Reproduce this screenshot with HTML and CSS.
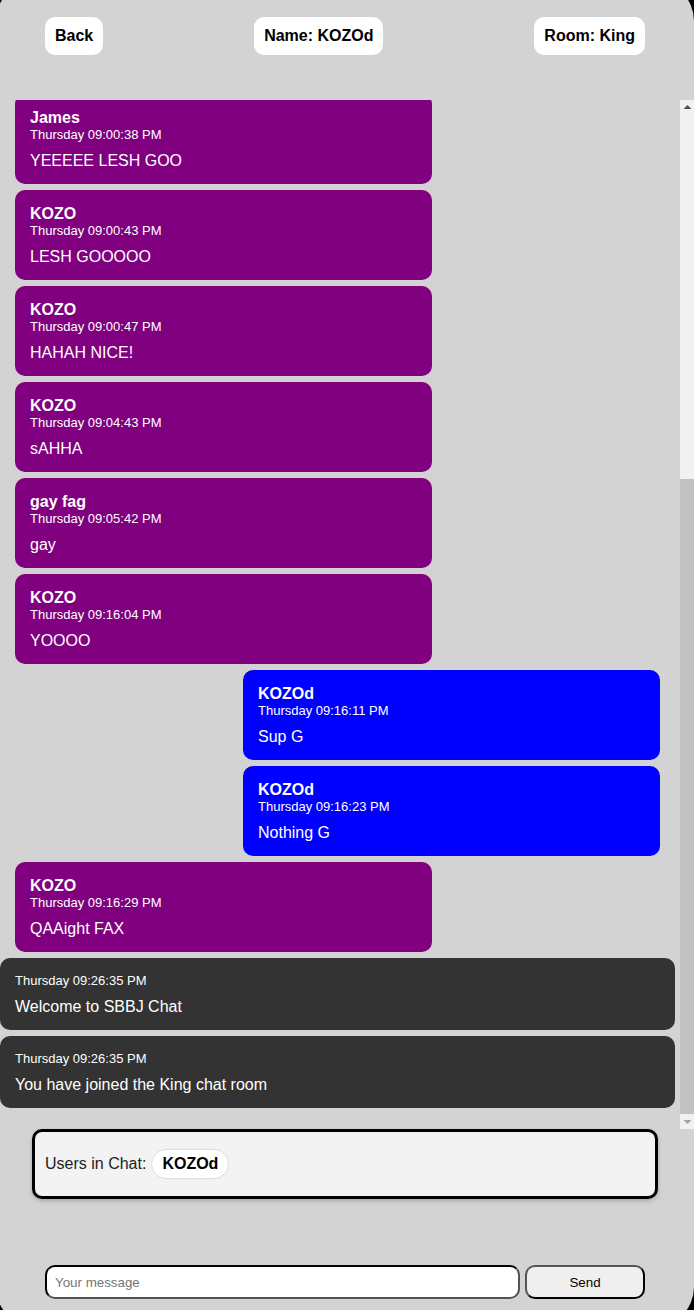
FILE: index.html
```html
<!DOCTYPE html>
<html lang="en">
<head>
<meta charset="utf-8">
<title>SBBJ Chat</title>
<link rel="stylesheet" href="styles.css">
</head>
<body>
<div class="app">
  <header class="topbar">
    <div class="top-btn">Back</div>
    <div class="top-btn">Name: KOZOd</div>
    <div class="top-btn">Room: King</div>
  </header>

  <div class="chat-row">
    <div class="chat">
      <div class="chat-inner">
        <div class="msg other"><div class="name">James</div><div class="time">Thursday 09:00:38 PM</div><div class="text">YEEEEE LESH GOO</div></div>
        <div class="msg other"><div class="name">KOZO</div><div class="time">Thursday 09:00:43 PM</div><div class="text">LESH GOOOOO</div></div>
        <div class="msg other"><div class="name">KOZO</div><div class="time">Thursday 09:00:47 PM</div><div class="text">HAHAH NICE!</div></div>
        <div class="msg other"><div class="name">KOZO</div><div class="time">Thursday 09:04:43 PM</div><div class="text">sAHHA</div></div>
        <div class="msg other"><div class="name">gay fag</div><div class="time">Thursday 09:05:42 PM</div><div class="text">gay</div></div>
        <div class="msg other"><div class="name">KOZO</div><div class="time">Thursday 09:16:04 PM</div><div class="text">YOOOO</div></div>
        <div class="msg mine"><div class="name">KOZOd</div><div class="time">Thursday 09:16:11 PM</div><div class="text">Sup G</div></div>
        <div class="msg mine"><div class="name">KOZOd</div><div class="time">Thursday 09:16:23 PM</div><div class="text">Nothing G</div></div>
        <div class="msg other"><div class="name">KOZO</div><div class="time">Thursday 09:16:29 PM</div><div class="text">QAAight FAX</div></div>
        <div class="msg system"><div class="time">Thursday 09:26:35 PM</div><div class="text">Welcome to SBBJ Chat</div></div>
        <div class="msg system"><div class="time">Thursday 09:26:35 PM</div><div class="text">You have joined the King chat room</div></div>
      </div>
    </div>
    <div class="scrollbar" aria-hidden="true">
      <div class="sb-btn">
        <svg width="15" height="15" viewBox="0 0 15 15"><path d="M3.5 9 L7.5 5 L11.5 9 Z" fill="#505050"/></svg>
      </div>
      <div class="sb-track"><div class="sb-thumb"></div></div>
      <div class="sb-btn">
        <svg width="15" height="15" viewBox="0 0 15 15"><path d="M3.5 6 L7.5 10 L11.5 6 Z" fill="#a3a3a3"/></svg>
      </div>
    </div>
  </div>

  <div class="users">
    <span class="users-label">Users in Chat:</span>
    <span class="user-pill">KOZOd</span>
  </div>

  <form class="composer">
    <input class="composer-input" type="text" placeholder="Your message">
    <button class="composer-send" type="button">Send</button>
  </form>
</div>
</body>
</html>
```

FILE: styles.css
```css
html, body {
  margin: 0;
  padding: 0;
  background: #000;
  overflow: hidden;
  height: 100%;
}

body {
  font-family: "Liberation Sans", Arial, sans-serif;
}

.app {
  width: 698px;
  height: 1346px;
  margin: -19px 0 0 -4px;
  background: #d3d3d3;
  border-radius: 40px;
  display: flex;
  flex-direction: column;
}

.topbar {
  display: flex;
  justify-content: space-between;
  padding: 36px 49px 0;
  margin-bottom: 45px;
}

.top-btn {
  background: #fff;
  color: #000;
  padding: 10px;
  border-radius: 10px;
  font-weight: bold;
  font-size: 16px;
  line-height: 18px;
}

.chat-row {
  margin-left: 4px;
  width: 695px;
  height: 1029px;
  flex: none;
  display: flex;
}

.chat {
  flex: 1;
  min-width: 0;
  overflow: hidden;
  display: flex;
  flex-direction: column-reverse;
}

.scrollbar {
  width: 15px;
  flex: none;
  display: flex;
  flex-direction: column;
  background: #f1f1f1;
}

.sb-btn {
  height: 15px;
  flex: none;
}

.sb-btn svg {
  display: block;
}

.sb-track {
  flex: 1;
  display: flex;
  flex-direction: column;
  justify-content: flex-end;
}

.sb-thumb {
  height: 635px;
  background: #c1c1c1;
}

.chat-inner {
  display: flex;
  flex-direction: column;
  gap: 6px;
  padding: 0 5px 21px 0;
}

.msg {
  box-sizing: border-box;
  width: 417px;
  padding: 15px 15px 14px;
  border-radius: 10px;
  color: #fff;
}

.msg.other {
  background: #800080;
  margin-left: 15px;
}

.msg.mine {
  background: #0000ff;
  margin-left: auto;
  margin-right: 15px;
}

.msg.system {
  background: #333333;
  width: auto;
}

.name {
  font-weight: bold;
  font-size: 16px;
  line-height: 18px;
}

.time {
  font-size: 13px;
  line-height: 15px;
}

.text {
  font-size: 16px;
  line-height: 18px;
  margin-top: 10px;
}

.users {
  margin: 0 36px;
  border: 3px solid #000;
  border-radius: 10px;
  background: #f3f3f3;
  padding: 17px 10px;
  display: flex;
  align-items: center;
  font-size: 16px;
  line-height: 18px;
  color: #222;
  box-shadow: 0 2px 4px rgba(0, 0, 0, 0.2);
}

.user-pill {
  margin-left: 5px;
  background: #fff;
  border: 1px solid #ddd;
  border-radius: 15px;
  padding: 5px 10px;
  font-weight: bold;
  color: #000;
}

.composer {
  margin: 66px 0 0;
  padding: 0 49px;
  display: flex;
  gap: 5px;
}

.composer-input {
  flex: 1;
  box-sizing: border-box;
  height: 34px;
  border: 2px inset #000;
  border-radius: 10px;
  padding: 0 8px;
  font-family: "Liberation Sans", Arial, sans-serif;
  font-size: 13.333px;
  background: #fff;
}

.composer-input::placeholder {
  color: #757575;
}

.composer-send {
  box-sizing: border-box;
  width: 120px;
  height: 34px;
  border: 2px outset #000;
  border-radius: 10px;
  background: #efefef;
  font-family: "Liberation Sans", Arial, sans-serif;
  font-size: 13.333px;
  color: #000;
}
```
